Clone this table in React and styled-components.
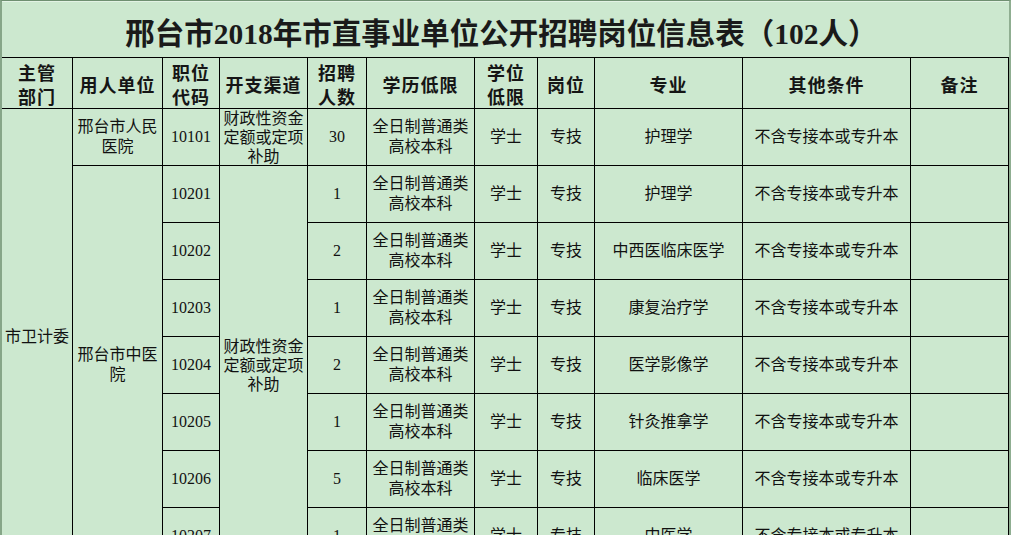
import styled, { createGlobalStyle } from "styled-components";

const GlobalStyle = createGlobalStyle`
  html, body {
    margin: 0;
    padding: 0;
    background: #cce8cf;
    overflow: hidden;
  }
  body {
    font-family: "Liberation Serif", "Noto Sans CJK SC", serif;
    color: #111;
  }
`;

const Sheet = styled.div`
  width: 1011px;
  height: 535px;
  box-sizing: border-box;
  border-left: 2px solid #86a688;
  border-right: 2px solid #8fae91;
  border-top: 1px solid #6f8f71;
  background: #cce8cf;
  overflow: hidden;
`;

const Title = styled.div`
  height: 56px;
  display: flex;
  align-items: center;
  justify-content: center;
  padding-right: 8px;
  padding-top: 2px;
  box-sizing: border-box;
  border-top: 1px solid #e2f2e4;
  font-family: "Liberation Serif", "Noto Sans CJK SC", serif;
  font-weight: 700;
  font-size: 29.5px;
  color: #1a1a1a;
  white-space: nowrap;
`;

const Grid = styled.div`
  display: grid;
  grid-template-columns: 71px 90px 57px 88px 59px 108px 63px 57px 148px 168px 98px;
  grid-template-rows: 51px repeat(8, 57px);
  border-top: 1px solid #000;
`;

const Cell = styled.div`
  grid-row: ${(p) => (p.$span ? `span ${p.$span}` : "auto")};
  display: flex;
  align-items: center;
  justify-content: center;
  text-align: center;
  box-sizing: border-box;
  border-right: 1px solid #000;
  border-bottom: 1px solid #000;
  font-size: 16px;
  line-height: ${(p) => p.$lh || 20}px;
  font-weight: 400;
  padding: 0 1px;
  overflow: visible;
`;

const HeadCell = styled(Cell)`
  font-family: "Noto Sans CJK SC", serif;
  font-weight: 700;
  font-size: 18px;
  letter-spacing: 1px;
  line-height: 24px;
  color: #151515;
  padding-top: 2px;
`;

const HeadText = styled.div`
  display: block;
`;

const FUND = "财政性资金定额或定项补助";
const EDU = "全日制普通类高校本科";
const OTHER = "不含专接本或专升本";

const headers = [
  ["主管", "部门"],
  ["用人单位"],
  ["职位", "代码"],
  ["开支渠道"],
  ["招聘", "人数"],
  ["学历低限"],
  ["学位", "低限"],
  ["岗位"],
  ["专业"],
  ["其他条件"],
  ["备注"],
];

const jobs = [
  { code: "10201", count: 1, major: "护理学" },
  { code: "10202", count: 2, major: "中西医临床医学" },
  { code: "10203", count: 1, major: "康复治疗学" },
  { code: "10204", count: 2, major: "医学影像学" },
  { code: "10205", count: 1, major: "针灸推拿学" },
  { code: "10206", count: 5, major: "临床医学" },
  { code: "10207", count: 1, major: "中医学" },
];

function JobCells({ code, count, major }) {
  return (
    <>
      <Cell>{code}</Cell>
      {/* funding / unit columns are merged and placed by the caller */}
      <Cell>{count}</Cell>
      <Cell>{EDU}</Cell>
      <Cell>学士</Cell>
      <Cell>专技</Cell>
      <Cell>{major}</Cell>
      <Cell>{OTHER}</Cell>
      <Cell />
    </>
  );
}

export default function App() {
  const [first, ...rest] = jobs;

  return (
    <>
      <GlobalStyle />
      <Sheet>
        <Title>邢台市2018年市直事业单位公开招聘岗位信息表（102人）</Title>
        <Grid>
          {headers.map((lines, i) => (
            <HeadCell key={i}>
              <HeadText>
                {lines.map((l) => (
                  <div key={l}>{l}</div>
                ))}
              </HeadText>
            </HeadCell>
          ))}

          {/* 10101 */}
          <Cell $span={8}>市卫计委</Cell>
          <Cell>邢台市人民医院</Cell>
          <Cell>10101</Cell>
          <Cell $lh={19}>{FUND}</Cell>
          <Cell>30</Cell>
          <Cell>{EDU}</Cell>
          <Cell>学士</Cell>
          <Cell>专技</Cell>
          <Cell>护理学</Cell>
          <Cell>{OTHER}</Cell>
          <Cell />

          {/* 中医院 block */}
          <Cell $span={7}>邢台市中医院</Cell>
          <Cell>{first.code}</Cell>
          <Cell $span={7} $lh={19}>
            {FUND}
          </Cell>
          <Cell>{first.count}</Cell>
          <Cell>{EDU}</Cell>
          <Cell>学士</Cell>
          <Cell>专技</Cell>
          <Cell>{first.major}</Cell>
          <Cell>{OTHER}</Cell>
          <Cell />

          {rest.map((j) => (
            <JobCells key={j.code} {...j} />
          ))}
        </Grid>
      </Sheet>
    </>
  );
}
